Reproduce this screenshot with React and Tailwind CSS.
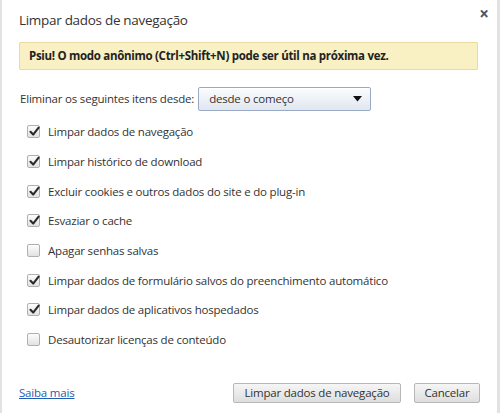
import React from "react";

const items = [
  { label: "Limpar dados de navegação", checked: true },
  { label: "Limpar histórico de download", checked: true },
  { label: "Excluir cookies e outros dados do site e do plug-in", checked: true },
  { label: "Esvaziar o cache", checked: true },
  { label: "Apagar senhas salvas", checked: false },
  { label: "Limpar dados de formulário salvos do preenchimento automático", checked: true },
  { label: "Limpar dados de aplicativos hospedados", checked: true },
  { label: "Desautorizar licenças de conteúdo", checked: false },
];

function Checkbox({ checked }) {
  return (
    <div className="relative w-[13px] h-[13px] shrink-0 rounded-[2px] border border-[#b0b0b0] bg-gradient-to-b from-[#fdfdfd] to-[#e2e2e2]">
      {checked && (
        <svg
          className="absolute left-[1px] top-[0px]"
          width="11"
          height="11"
          viewBox="0 0 11 11"
        >
          <path
            d="M1.5 5.8 L4.2 8.6 L9.6 1.6"
            fill="none"
            stroke="#2b2b2b"
            strokeWidth="2.1"
            strokeLinecap="round"
            strokeLinejoin="round"
          />
        </svg>
      )}
    </div>
  );
}

export default function App() {
  return (
    <div
      className="w-[500px] h-[413px] bg-white border-l-[2px] border-r-[3px] border-[#e2e2e2] text-[#333] flex flex-col relative"
      style={{ fontFamily: '"Open Sans", "Noto Sans", sans-serif' }}
    >
      <button className="absolute right-[8px] top-[5px] text-[#555] text-[17px] leading-none font-bold">
        ×
      </button>
      <div className="pl-[17px] pt-[10px] h-[42px] text-[13.5px] leading-[20px] text-[#333] tracking-[-0.3px]">
        Limpar dados de navegação
      </div>
      <div className="ml-[17px] mr-[19px] h-[28px] flex items-center pl-[9px] bg-[#f9f0c3] border border-[#e9db9f] rounded-[1px] text-[11.5px] font-bold text-[#222] tracking-[-0.3px]">
        Psiu! O modo anônimo (Ctrl+Shift+N) pode ser útil na próxima vez.
      </div>
      <div className="pl-[18px] mt-[17px] flex items-center gap-[4px] text-[11.5px] tracking-[-0.2px]">
        <span>Eliminar os seguintes itens desde:</span>
        <div className="w-[173px] h-[24px] flex items-center justify-between pl-[10px] pr-[8px] rounded-[2px] border border-[#9aaac4] bg-gradient-to-b from-[#fbfcfe] to-[#e1e7f0] shadow-[inset_0_1px_0_#ffffff]">
          <span>desde o começo</span>
          <svg width="9" height="6" viewBox="0 0 9 6">
            <path d="M0 0 H9 L4.5 5.5 Z" fill="#111" />
          </svg>
        </div>
      </div>
      <div className="mt-[6px] pl-[25px] flex flex-col">
        {items.map((it) => (
          <div
            key={it.label}
            className="h-[29.7px] flex items-center gap-[8px] text-[11.5px] tracking-[-0.2px]"
          >
            <Checkbox checked={it.checked} />
            <span>{it.label}</span>
          </div>
        ))}
      </div>
      <div className="mt-auto mb-[10px] pl-[17px] pr-[17px] flex items-center">
        <a className="text-[11.5px] text-[#1f5bb0] underline tracking-[-0.2px]" href="#">
          Saiba mais
        </a>
        <div className="ml-auto flex items-center gap-[13px]">
          <button className="h-[20px] w-[168px] rounded-[2px] border border-[#b7b7b7] bg-gradient-to-b from-[#f6f6f6] to-[#dedede] text-[11.5px] text-[#333] tracking-[-0.2px]">
            Limpar dados de navegação
          </button>
          <button className="h-[20px] w-[66px] rounded-[2px] border border-[#b7b7b7] bg-gradient-to-b from-[#f6f6f6] to-[#dedede] text-[11.5px] text-[#333] tracking-[-0.2px]">
            Cancelar
          </button>
        </div>
      </div>
    </div>
  );
}
